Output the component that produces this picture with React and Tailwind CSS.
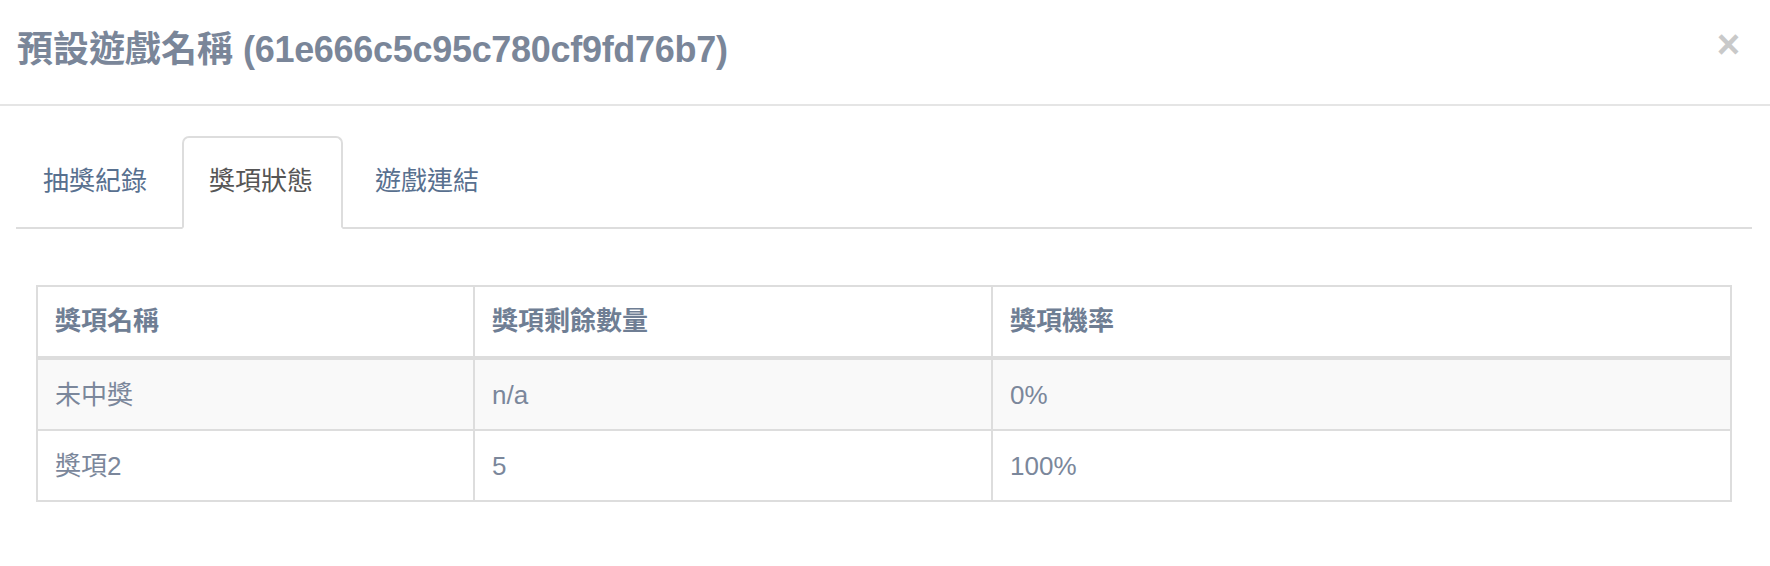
const tabs = ["抽獎紀錄", "獎項狀態", "遊戲連結"];

const prizes = [
  { name: "未中獎", left: "n/a", rate: "0%" },
  { name: "獎項2", left: "5", rate: "100%" },
];

export default function App() {
  const active = 1;

  return (
    <div className="min-h-[566px] bg-white font-['Liberation_Sans','Noto_Sans_CJK_TC',sans-serif]">
      {/* Modal header */}
      <div className="flex h-[106px] items-start justify-between border-b-2 border-[#e5e5e5] pl-[17px] pr-[30px] pt-[30px]">
        <h4 className="text-[36px] font-bold leading-[40px] text-[#7a8699]">
          預設遊戲名稱 <span className="tracking-[-0.3px]">(61e666c5c95c780cf9fd76b7)</span>
        </h4>
        <button className="mt-[-6px] text-[40px] font-bold leading-[40px] text-[#c9c9c9]">
          ×
        </button>
      </div>

      {/* Modal body */}
      <div className="pl-4 pr-[18px] pt-[30px]">
        <ul className="flex gap-[5px] border-b-2 border-[#dddddd]">
          {tabs.map((t, i) => (
            <li key={t} className="-mb-[2px]">
              <a
                className={
                  i === active
                    ? "flex h-[93px] items-center rounded-t-[7px] border-2 border-[#dddddd] border-b-white bg-white pb-[2px] pl-[25px] pr-[28px] text-[26px] text-[#555555]"
                    : "flex h-[93px] items-center rounded-t-[7px] border-2 border-transparent pb-[2px] pl-[25px] pr-[28px] text-[26px] text-[#58708f]"
                }
              >
                {t}
              </a>
            </li>
          ))}
        </ul>

        <div className="px-5 pt-[56px]">
          <table className="w-full border-collapse border-2 border-[#dddddd] text-left text-[26px]">
            <thead>
              <tr>
                <th className="w-[437px] border-2 border-b-4 border-[#dddddd] px-[17px] py-[16px] font-bold leading-[37px] text-[#6f7e94]">
                  獎項名稱
                </th>
                <th className="w-[518px] border-2 border-b-4 border-[#dddddd] px-[17px] py-[16px] font-bold leading-[37px] text-[#6f7e94]">
                  獎項剩餘數量
                </th>
                <th className="border-2 border-b-4 border-[#dddddd] px-[17px] py-[16px] font-bold leading-[37px] text-[#6f7e94]">
                  獎項機率
                </th>
              </tr>
            </thead>
            <tbody>
              {prizes.map((p, i) => (
                <tr key={p.name} className={i % 2 === 0 ? "bg-[#f9f9f9]" : "bg-white"}>
                  <td className="border-2 border-[#dddddd] px-[17px] pb-[15px] pt-[17px] leading-[37px] text-[#7b879b]">
                    {p.name}
                  </td>
                  <td className="border-2 border-[#dddddd] px-[17px] pb-[15px] pt-[17px] leading-[37px] text-[#7b879b]">
                    {p.left}
                  </td>
                  <td className="border-2 border-[#dddddd] px-[17px] pb-[15px] pt-[17px] leading-[37px] text-[#7b879b]">
                    {p.rate}
                  </td>
                </tr>
              ))}
            </tbody>
          </table>
        </div>
      </div>
    </div>
  );
}
